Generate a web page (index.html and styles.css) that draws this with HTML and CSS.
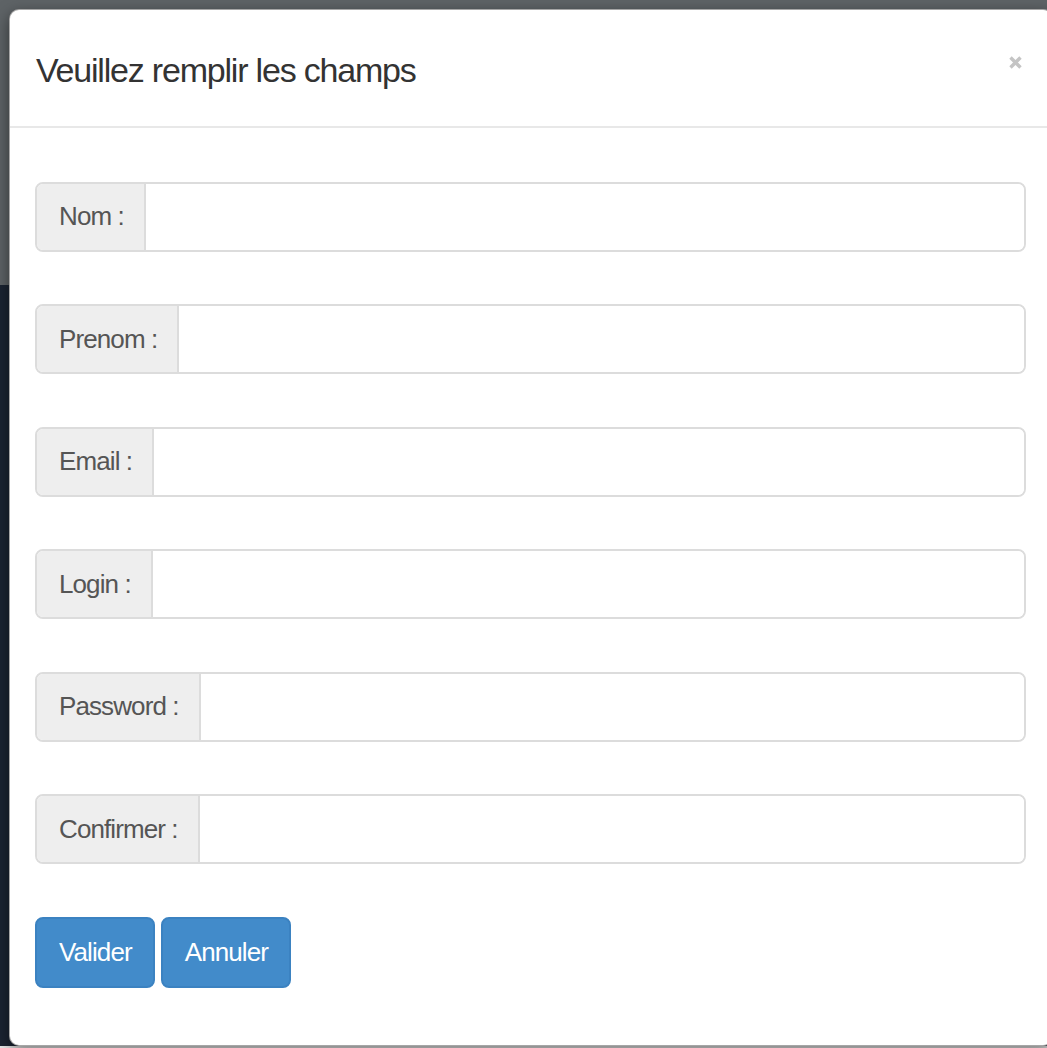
FILE: index.html
```html
<!DOCTYPE html>
<html lang="fr">
<head>
<meta charset="utf-8">
<title>Inscription</title>
<link rel="stylesheet" href="styles.css">
</head>
<body>
  <div class="modal-dialog">
    <div class="modal-content">
      <div class="modal-header">
        <h4 class="modal-title">Veuillez remplir les champs</h4>
        <button type="button" class="close" aria-label="Fermer">
          <svg viewBox="0 0 13 13" width="13" height="13"><path d="M1.5 1.5 L11.5 11.5 M11.5 1.5 L1.5 11.5" stroke="currentColor" stroke-width="3.4" stroke-linecap="butt"/></svg>
        </button>
      </div>
      <form class="modal-body">
        <div class="input-group"><span class="addon">Nom :</span><input type="text" class="field"></div>
        <div class="input-group"><span class="addon">Prenom :</span><input type="text" class="field"></div>
        <div class="input-group"><span class="addon">Email :</span><input type="text" class="field"></div>
        <div class="input-group"><span class="addon">Login :</span><input type="text" class="field"></div>
        <div class="input-group"><span class="addon">Password :</span><input type="password" class="field"></div>
        <div class="input-group"><span class="addon">Confirmer :</span><input type="password" class="field"></div>
        <div class="actions">
          <button type="submit" class="btn">Valider</button>
          <button type="button" class="btn">Annuler</button>
        </div>
      </form>
    </div>
  </div>
</body>
</html>
```

FILE: styles.css
```css
html, body {
  margin: 0;
  height: 100%;
}

body {
  overflow: hidden;
  font-family: "Liberation Sans", Arial, sans-serif;
  background: linear-gradient(#5e6366 0 285px, #1b2432 285px 1046px, #e9e9e9 1046px);
}

.modal-dialog {
  padding: 9px 0 0 9px;
}

.modal-content {
  box-sizing: border-box;
  width: 1044px;
  height: 1037px;
  background: #fff;
  border: 1px solid rgba(0, 0, 0, 0.35);
  border-radius: 10px;
  box-shadow: 0 5px 15px rgba(0, 0, 0, 0.5);
}

.modal-header {
  display: flex;
  align-items: flex-start;
  padding: 39px 26px 35px 26px;
  border-bottom: 2px solid #e8e8e8;
}

.modal-title {
  flex: 1;
  margin: 0;
  font-size: 34px;
  letter-spacing: -1.2px;
  line-height: 42px;
  font-weight: normal;
  color: #333;
}

.close {
  margin: 7px 4px 0 0;
  padding: 0;
  border: 0;
  background: none;
  color: #c4c4c4;
  line-height: 0;
}

.modal-body {
  display: flex;
  flex-direction: column;
  gap: 52.6px;
  padding: 53.5px 26px 0 25px;
}

.input-group {
  box-sizing: border-box;
  display: flex;
  height: 70px;
  border: 2px solid #dcdcdc;
  border-radius: 8px;
  overflow: hidden;
}

.addon {
  display: flex;
  align-items: center;
  padding: 0 20px 0 22px;
  background: #eee;
  border-right: 2px solid #dcdcdc;
  color: #555;
  font-size: 26px;
  letter-spacing: -0.9px;
  white-space: nowrap;
}

.field {
  flex: 1;
  min-width: 0;
  border: 0;
  outline: 0;
  padding: 0 22px;
  font: inherit;
  background: #fff;
}

.actions {
  display: flex;
  gap: 6px;
}

.btn {
  box-sizing: border-box;
  height: 71px;
  padding: 0 21px 0 22px;
  border: 2px solid #3b82c1;
  border-radius: 8px;
  background: #428bca;
  color: #fff;
  font-family: inherit;
  font-size: 26px;
  letter-spacing: -0.9px;
  cursor: pointer;
}
```
